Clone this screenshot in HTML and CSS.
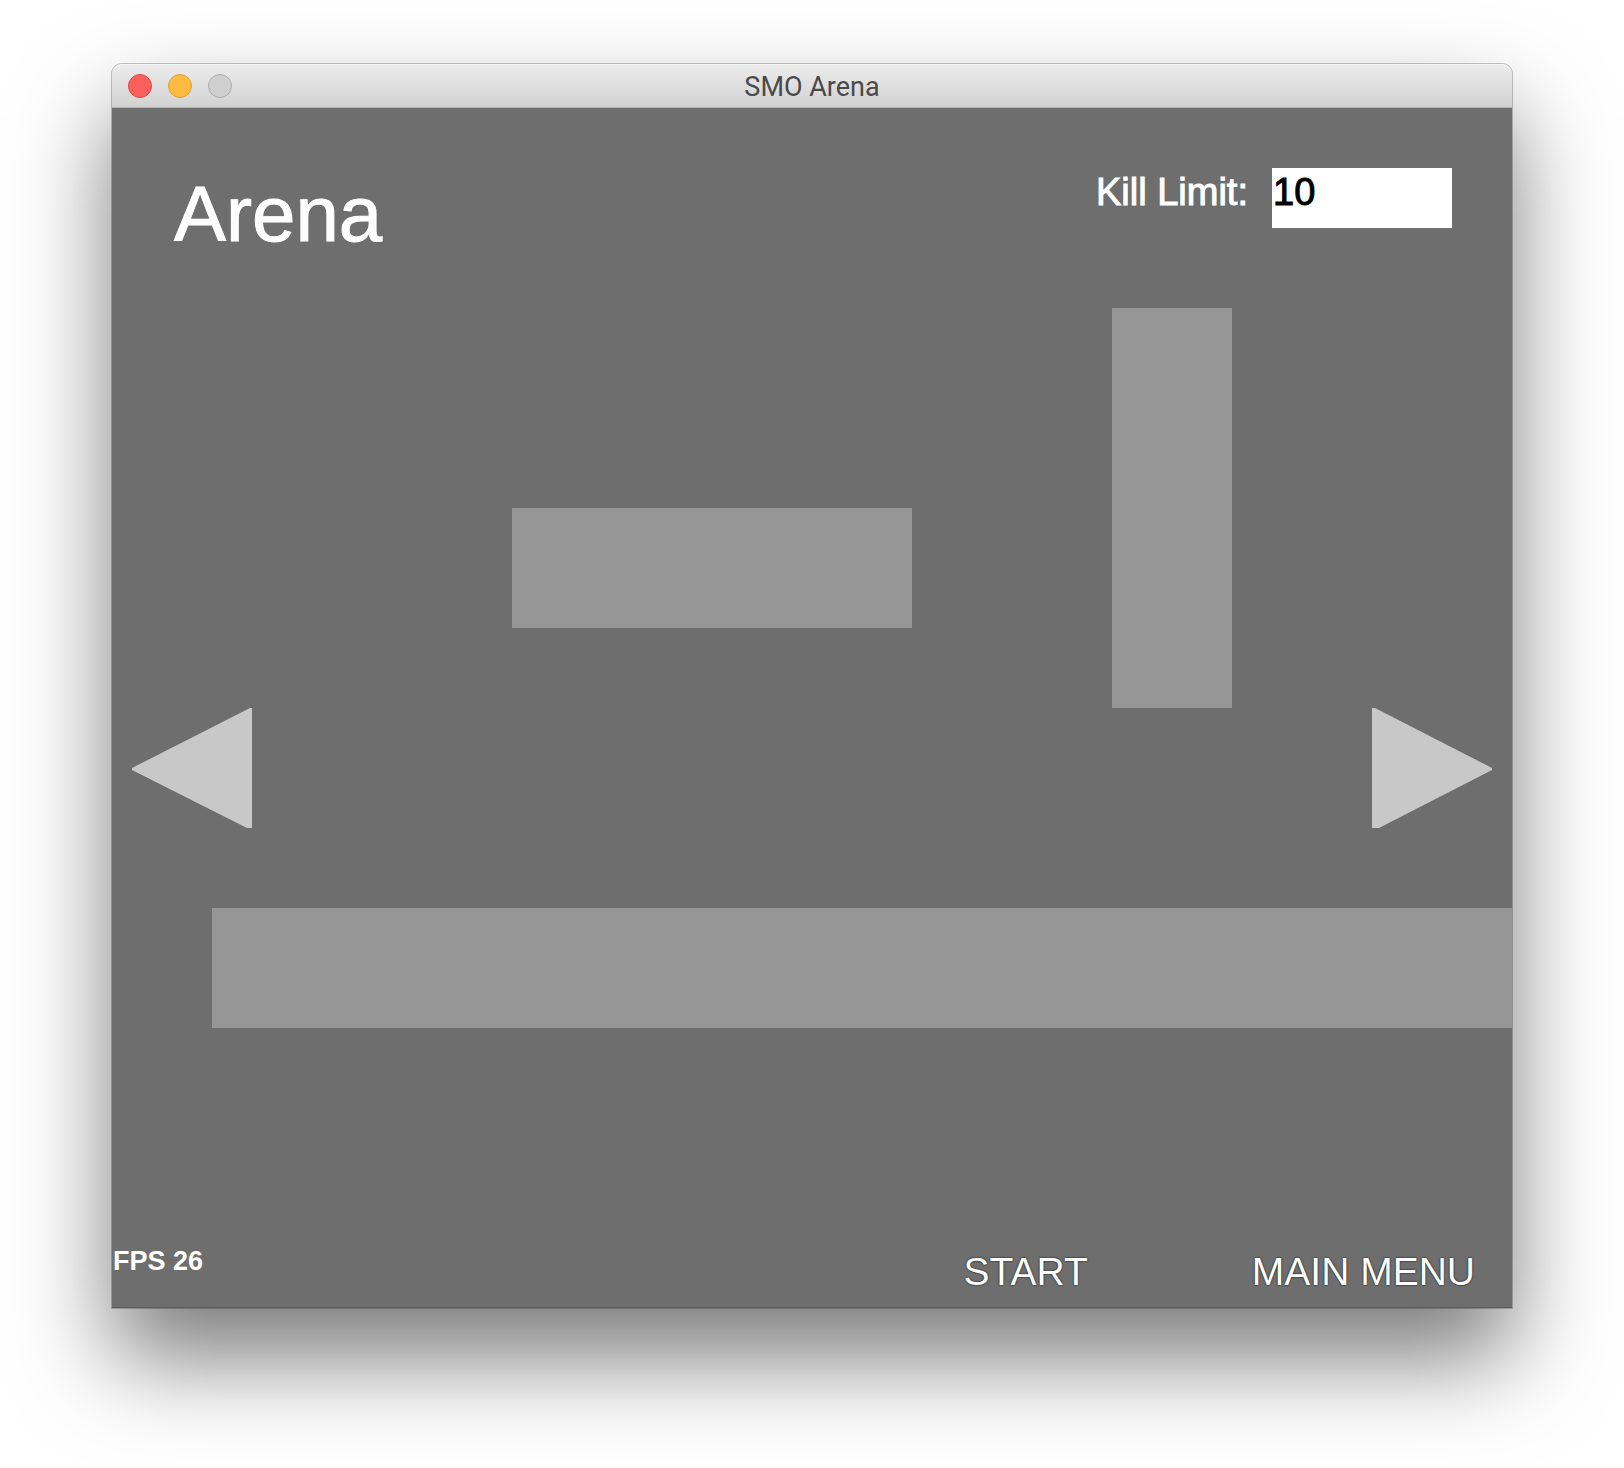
FILE: index.html
```html
<!DOCTYPE html>
<html lang="en">
<head>
<meta charset="utf-8">
<meta name="viewport" content="width=device-width, initial-scale=1">
<title>SMO Arena</title>
<link rel="stylesheet" href="styles.css">
</head>
<body>
<main class="window">
  <header class="titlebar">
    <div class="controls">
      <button class="control control-close" type="button" aria-label="Close"></button>
      <button class="control control-minimize" type="button" aria-label="Minimize"></button>
      <button class="control control-zoom" type="button" aria-label="Zoom" disabled></button>
    </div>
    <span class="window-title">SMO Arena</span>
  </header>
  <section class="stage">
    <svg class="map" viewBox="0 0 1400 1200" aria-hidden="true">
      <rect x="400" y="400" width="400" height="120"/>
      <rect x="1000" y="200" width="120" height="400"/>
      <rect x="100" y="800" width="1300" height="120"/>
    </svg>
    <div class="settings">
      <h1 class="heading">Arena</h1>
      <div class="field">
        <label class="field-label" for="kill-limit">Kill Limit:</label>
        <input class="field-input" id="kill-limit" type="text" inputmode="numeric" value="10">
      </div>
    </div>
    <div class="arrows">
      <button class="arrow" type="button" aria-label="Previous map">
        <svg viewBox="0 0 120 120" width="120" height="120"><path d="M120 0h-2L0 60v2l115 58h5z"/></svg>
      </button>
      <button class="arrow" type="button" aria-label="Next map">
        <svg viewBox="0 0 120 120" width="120" height="120"><path d="M0 0h3l117 60v2L7 120H0z"/></svg>
      </button>
    </div>
    <footer class="footer">
      <span class="fps">FPS 26</span>
      <nav class="actions">
        <button class="action" type="button">START</button>
        <button class="action" type="button">MAIN MENU</button>
      </nav>
    </footer>
  </section>
</main>
</body>
</html>
```
FILE: styles.css
```css
* {
  box-sizing: border-box;
}

body {
  margin: 0;
  padding: 64px 112px 160px;
  background: #fff;
  font-family: "Liberation Sans", Arial, sans-serif;
}

button {
  padding: 0;
  border: 0;
  background: none;
  color: inherit;
  font: inherit;
}

.window {
  border-radius: 10px 10px 0 0;
  box-shadow: 0 0 0 1px rgba(0, 0, 0, 0.22), 0 50px 96px rgba(0, 0, 0, 0.52);
}

.titlebar {
  display: grid;
  grid-template-columns: 1fr auto 1fr;
  align-items: center;
  height: 44px;
  padding: 0 16px;
  border-top: 1px solid #f6f6f6;
  border-bottom: 1px solid #b2b2b2;
  border-radius: 10px 10px 0 0;
  background: linear-gradient(#ebebeb, #d2d2d2);
}

.controls {
  display: flex;
  gap: 16px;
}

.control {
  width: 24px;
  height: 24px;
  border: 1px solid;
  border-radius: 50%;
}

.control-close {
  border-color: #e04744;
  background: #fc605c;
}

.control-minimize {
  border-color: #dd9f35;
  background: #fdbc40;
}

.control-zoom {
  border-color: #acacac;
  background: #cfcfcf;
}

.window-title {
  padding-top: 2px;
  color: #4a4a4a;
  font: 27px/32px Roboto, sans-serif;
}

.stage {
  position: relative;
  display: grid;
  grid-template-rows: 5fr auto 4fr;
  aspect-ratio: 7 / 6;
  overflow: hidden;
  background: #6e6e6e;
  box-shadow: inset 0 -1px #5c5c5c;
  color: #fff;
}

.map {
  position: absolute;
  inset: 0;
  width: 100%;
  height: 100%;
  fill: #969696;
}

.settings,
.arrows,
.footer {
  position: relative;
  display: flex;
  justify-content: space-between;
}

.settings {
  align-items: flex-start;
  padding: 60px 60px 0 62px;
}

.heading {
  margin: 0;
  font-size: 78px;
  font-weight: 400;
  line-height: 92px;
  -webkit-text-stroke: 1px;
}

.field {
  display: flex;
  gap: 24px;
  font-size: 38px;
  line-height: 48px;
  -webkit-text-stroke: 1px;
}

.field-input {
  width: 180px;
  height: 60px;
  padding: 0 0 12px 1px;
  border: 0;
  border-radius: 0;
  background: #fff;
  color: #000;
  font: inherit;
}

.arrows {
  padding: 0 20px;
}

.arrow svg {
  display: block;
  fill: #c8c8c8;
}

.footer {
  align-items: flex-end;
}

.fps {
  padding: 0 0 31px 1px;
  font-size: 27px;
  font-weight: 700;
  line-height: 32px;
}

.actions {
  display: flex;
  gap: 164px;
  padding: 0 37px 12px 0;
  font-size: 39px;
  line-height: 48px;
}

.action {
  text-shadow: 0 0 2px #000;
}
```
